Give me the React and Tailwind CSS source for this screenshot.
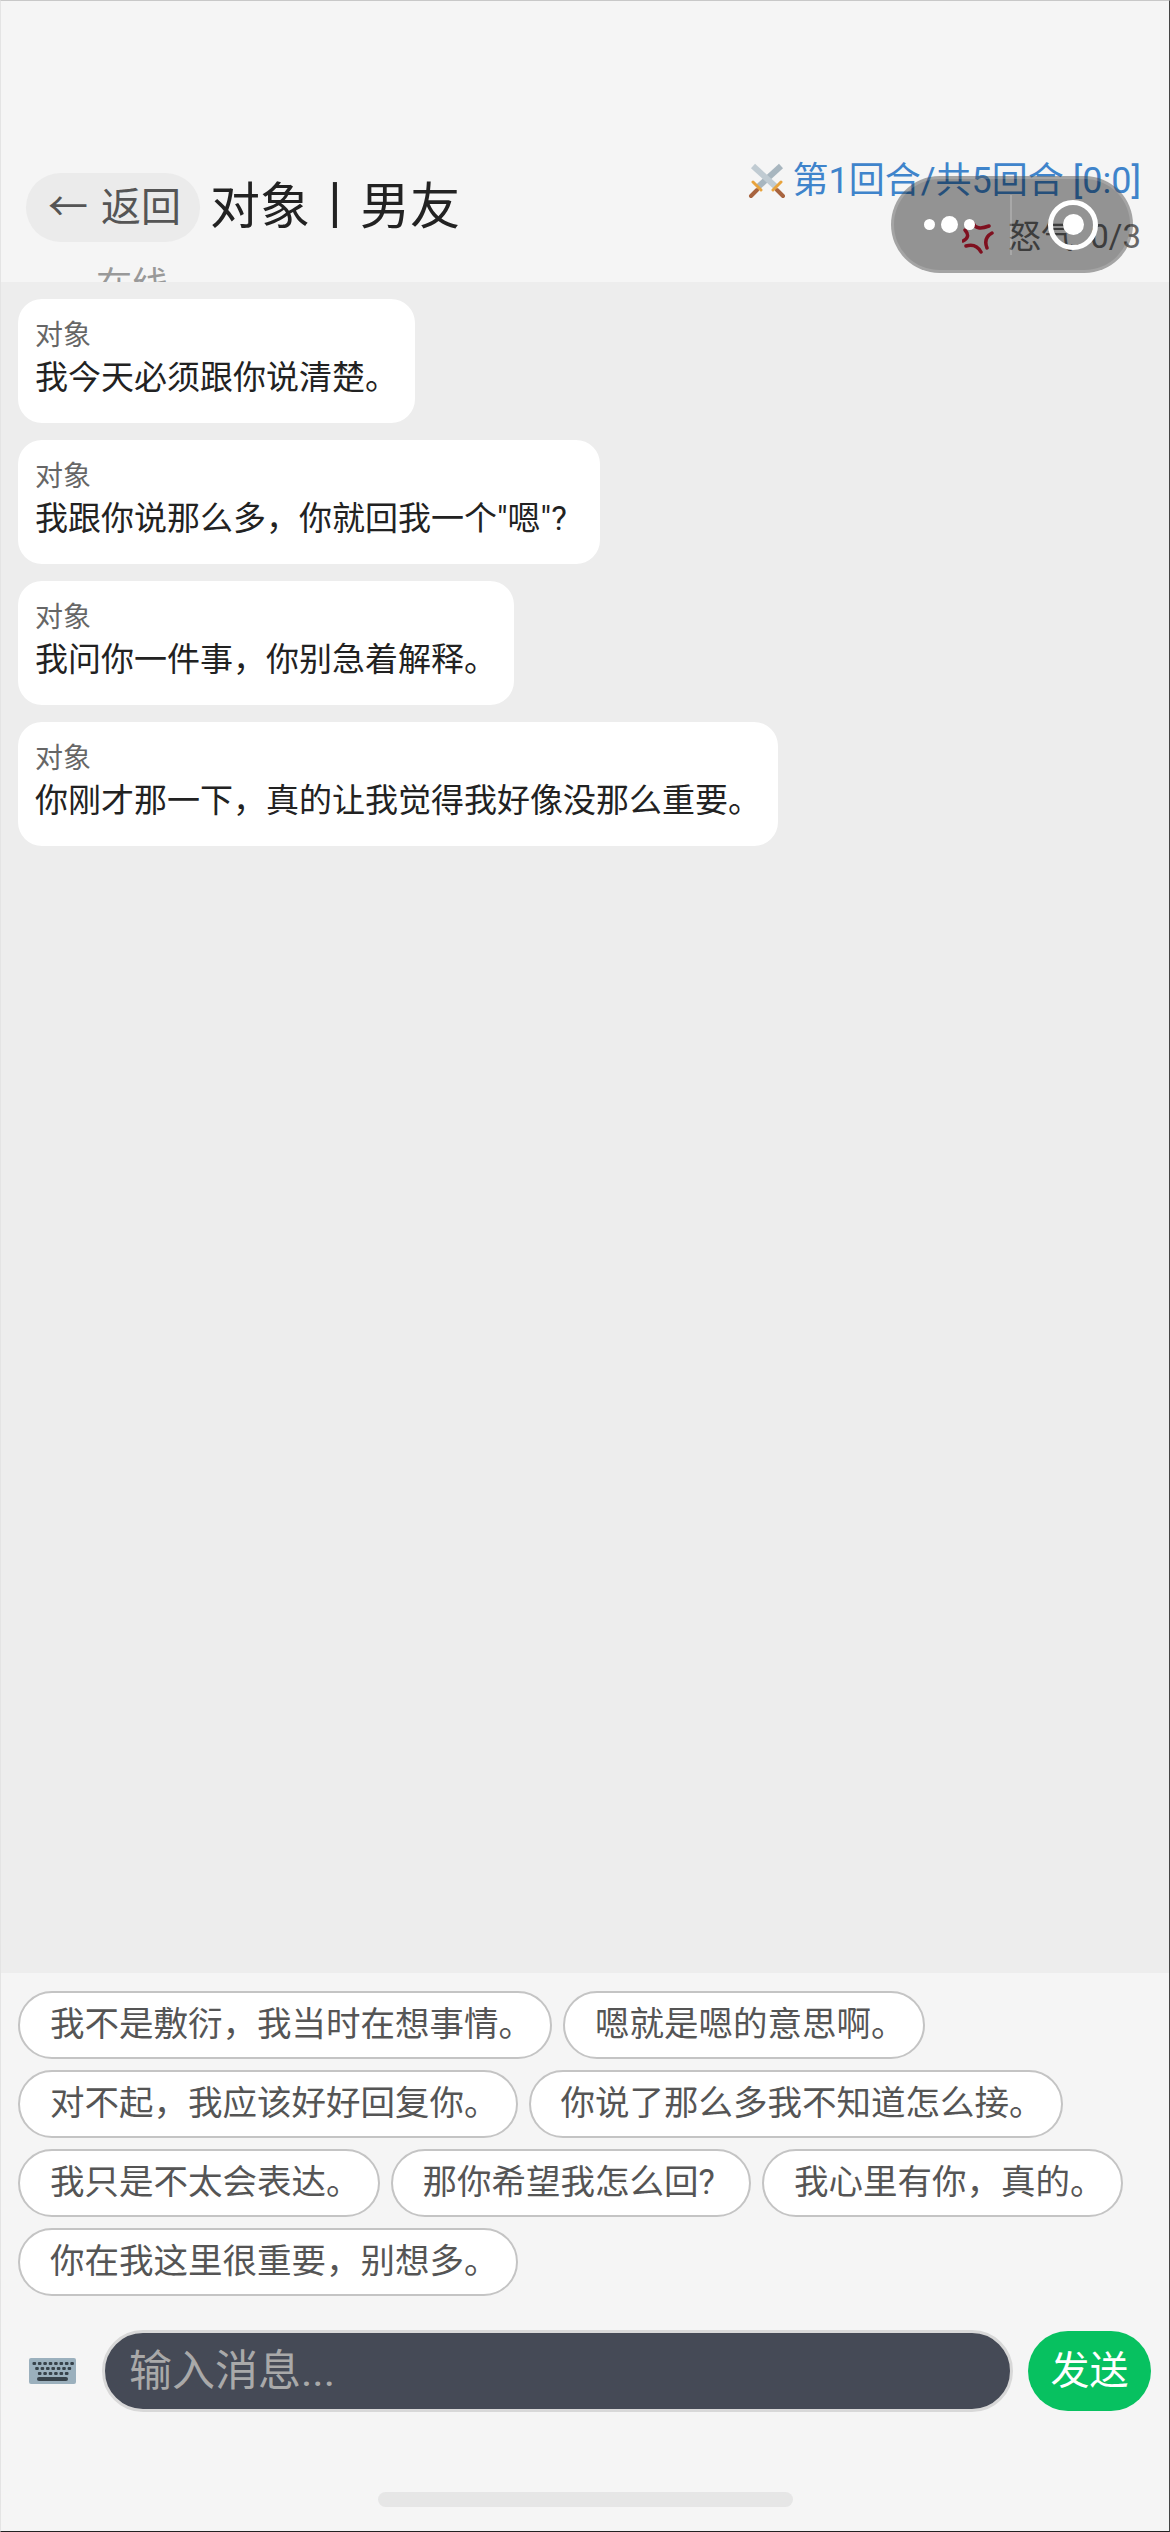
const font = { fontFamily: '"Roboto", "Noto Sans CJK SC", sans-serif' }

const messages = [
  '我今天必须跟你说清楚。',
  '我跟你说那么多，你就回我一个"嗯"?\u00a0\u00a0',
  '我问你一件事，你别急着解释。',
  '你刚才那一下，真的让我觉得我好像没那么重要。',
]

const replies = [
  '我不是敷衍，我当时在想事情。',
  '嗯就是嗯的意思啊。',
  '对不起，我应该好好回复你。',
  '你说了那么多我不知道怎么接。',
  '我只是不太会表达。',
  '那你希望我怎么回?\u00a0\u00a0',
  '我心里有你，真的。',
  '你在我这里很重要，别想多。',
]

function Swords() {
  return (
    <svg width="38" height="36" viewBox="0 0 38 36" fill="none">
      <path d="M10 24 L33 3" stroke="#a8b6bf" strokeWidth="6" />
      <path d="M28 24 L5 3" stroke="#c0cbd2" strokeWidth="6" />
      <path d="M9 27 L3 33 M29 27 L35 33" stroke="#a8643f" strokeWidth="4" strokeLinecap="round" />
      <path d="M5 19 L13 27 M33 19 L25 27" stroke="#e8a33d" strokeWidth="3" strokeLinecap="round" />
    </svg>
  )
}

function Anger() {
  return (
    <svg width="32" height="33" viewBox="0 0 32 33" fill="none" stroke="#d41b35" strokeWidth="3.5" strokeLinecap="round">
      <path d="M11 2 Q14 10 27 5" />
      <path d="M30 12 Q21 17 25 27" />
      <path d="M4 25 Q14 22 19 31" />
      <path d="M1 20 Q9 16 3 9" />
    </svg>
  )
}

function Keyboard() {
  const keys = []
  for (let r = 0; r < 3; r++) {
    for (let c = 0; c < 8 - r; c++) {
      keys.push(<rect key={r + '-' + c} x={3.5 + r * 2.7 + c * 5.4} y={4 + r * 5} width="3.6" height="3" rx="1" fill="#37424a" />)
    }
  }
  return (
    <svg width="47" height="26" viewBox="0 0 47 26">
      <rect x="0" y="0" width="47" height="26" rx="2" fill="#9bb0bd" />
      {keys}
      <rect x="8" y="19" width="31" height="4" rx="2" fill="#37424a" />
    </svg>
  )
}

export default function App() {
  return (
    <div style={font} className="relative w-[1170px] h-[2532px] flex flex-col bg-[#f5f5f5]">
      <header className="relative h-[282px] shrink-0 overflow-hidden pt-[173px] pl-[26px] pr-[29px] flex justify-between">
        <div className="flex items-start gap-[10px]">
          <button className="h-[69px] w-[174px] pl-[3px] rounded-full bg-[#ebebeb] text-[#555] text-[40px] flex items-center justify-center">
            <span>←</span>
            <span className="ml-[13px]">返回</span>
          </button>
          <div>
            <div className="text-[50px] leading-[68px] text-[#222] whitespace-nowrap">对象丨男友</div>
            <div className="text-[36px] leading-[50px] text-[#999] mt-[20px] -ml-[114px]">在线</div>
          </div>
        </div>
        <div className="-mt-[14px] flex flex-col items-end">
          <div className="flex items-center gap-[6px] h-[44px] text-[36px] text-[#3f84cb] whitespace-nowrap">
            <Swords />
            <span>第1回合/共5回合 [0:0]</span>
          </div>
          <div className="flex items-center gap-[14px] h-[50px] mt-[9px] text-[33px] text-[#666] whitespace-nowrap">
            <Anger />
            <span>怒气: 0/3</span>
          </div>
        </div>

        <div className="absolute left-[891px] top-[176px] w-[242px] h-[97px] rounded-full bg-black/40 border-[3px] border-white/15 flex items-center">
          <div className="w-[116px] flex items-center gap-[6px] pl-[30px]">
            <span className="w-[11px] h-[11px] rounded-full bg-white" />
            <span className="w-[17px] h-[17px] rounded-full bg-white" />
            <span className="w-[11px] h-[11px] rounded-full bg-white" />
          </div>
          <div className="w-[2px] h-[60px] bg-white/20" />
          <div className="ml-[36px] w-[50px] h-[50px] rounded-full border-[5px] border-white flex items-center justify-center">
            <span className="w-[21px] h-[21px] rounded-full bg-white" />
          </div>
        </div>
      </header>

      <main className="flex-1 bg-[#ededed] flex flex-col items-start gap-[17px] pl-[18px] pt-[17px]">
        {messages.map(m => (
          <div key={m} className="h-[124px] bg-white rounded-[24px] px-[17px] pt-[18px]">
            <div className="text-[28px] leading-[38px] text-[#666]">对象</div>
            <div className="text-[33px] leading-[46px] text-[#222] whitespace-nowrap">{m}</div>
          </div>
        ))}
      </main>

      <footer className="h-[559px] shrink-0 relative">
        <div className="flex flex-wrap gap-x-[11px] gap-y-[11px] pl-[18px] pr-[18px] pt-[18px]">
          {replies.map(r => (
            <button key={r} className="h-[68px] pl-[30px] pr-[17px] rounded-full bg-white border-2 border-[#c4c4c4] text-[34.5px] text-[#555] whitespace-nowrap flex items-center">
              {r}
            </button>
          ))}
        </div>
        <div className="flex items-center mt-[34px] pl-[29px]">
          <Keyboard />
          <input
            placeholder="输入消息..."
            className="ml-[26px] w-[911px] h-[82px] rounded-full bg-[#454a56] border-[3px] border-[#d8d8d8] px-[24px] text-[43px] placeholder:text-[#a9a9a9] outline-none"
          />
          <button className="ml-[15px] w-[123px] h-[80px] rounded-full bg-[#07c160] text-white text-[39px]">发送</button>
        </div>
        <div className="absolute left-[378px] top-[519px] w-[415px] h-[15px] rounded-full bg-[#e6e6e6]" />
      </footer>

      <div className="absolute inset-0 pointer-events-none border border-t-[#c8c8c8] border-b-[#222] border-l-[#e4e4e4] border-r-[#444]" />
    </div>
  )
}
